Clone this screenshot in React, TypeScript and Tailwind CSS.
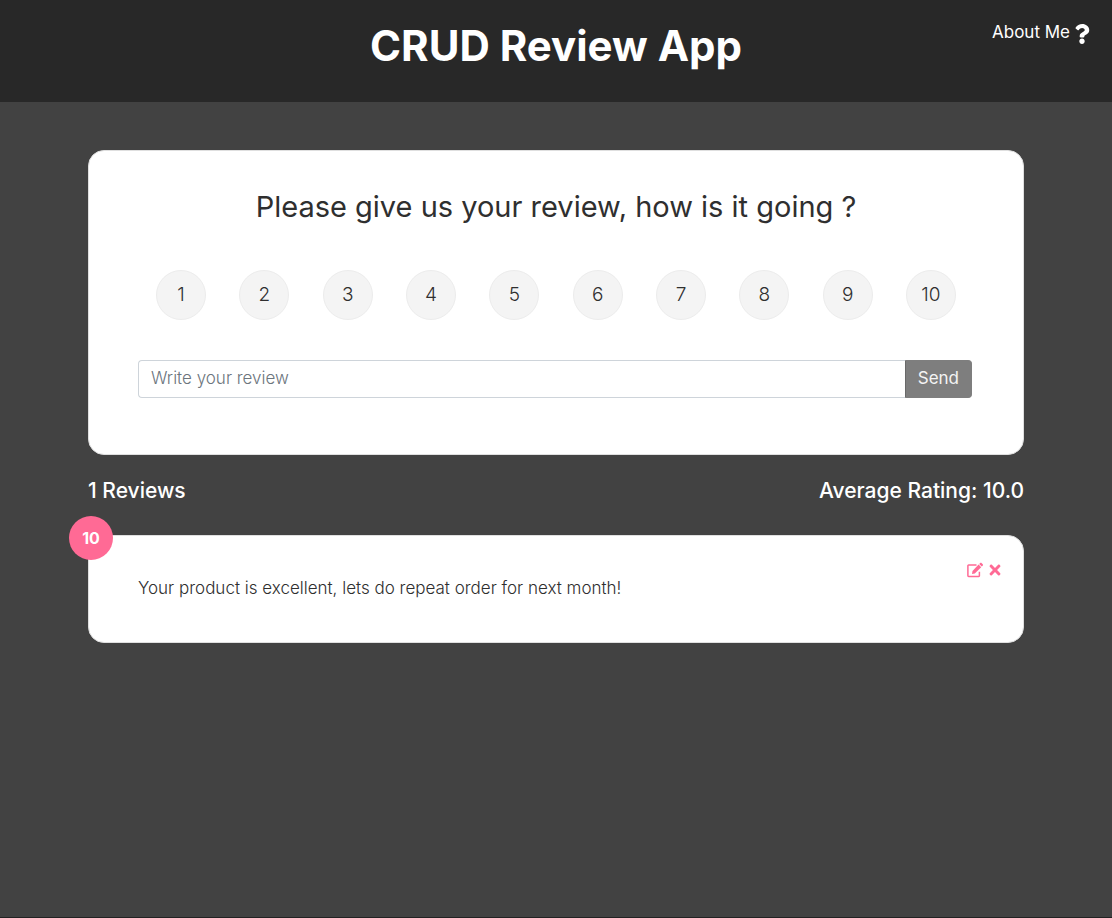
import { FaQuestion, FaTimes } from "react-icons/fa";
import { useState } from "react";

const ratings = [1, 2, 3, 4, 5, 6, 7, 8, 9, 10];

function EditIcon() {
  return (
    <svg width="16" height="16" viewBox="0 0 16 16" fill="none" aria-hidden="true">
      <path d="M9.5 3H1.6a.7.7 0 0 0-.7.7v10.1c0 .4.3.7.7.7h10.1a.7.7 0 0 0 .7-.7V9.8" stroke="currentColor" strokeWidth="1.5" />
      <path d="M11.6 2.6l2.6 2.6-6.4 6.3-2.8.5.5-3.1z" fill="currentColor" />
      <path d="M12.2 2l.8-.8c.5-.5 1.2-.5 1.7 0l.9.9c.5.5.5 1.2 0 1.7l-.8.8z" fill="currentColor" />
    </svg>
  );
}

function Header() {
  return (
    <header className="relative bg-[#282828] px-5 pt-[22px] pb-8 text-white">
      <h1 className="text-center text-[42px] leading-[48px] font-bold">CRUD Review App</h1>
      <a href="#about" className="absolute top-5 right-5 flex items-start gap-0.5 text-[17px] leading-6">
        About Me
        <FaQuestion size={20} className="mt-1" aria-hidden="true" />
      </a>
    </header>
  );
}

function ReviewForm() {
  const [rating, setRating] = useState<number | null>(null);
  const [text, setText] = useState("");

  return (
    <form
      className="rounded-2xl border border-[#dfdfdf] bg-white px-[49px] pt-9 pb-14"
      onSubmit={(event) => event.preventDefault()}
    >
      <h2 className="text-center text-[29px] leading-10">Please give us your review, how is it going ?</h2>
      <fieldset className="mt-[43px] flex justify-between px-[18px]">
        {ratings.map((value) => (
          <label
            key={value}
            className="flex size-[50px] cursor-pointer items-center justify-center rounded-full border border-[#ececec] bg-[#f4f4f4] text-[19px] font-light has-checked:bg-[#ff6a95] has-checked:text-white"
          >
            <input
              type="radio"
              name="rating"
              value={value}
              checked={rating === value}
              onChange={() => setRating(value)}
              className="sr-only"
            />
            {value}
          </label>
        ))}
      </fieldset>
      <div className="mt-10 mr-0.5 flex h-[38px]">
        <input
          type="text"
          aria-label="Write your review"
          placeholder="Write your review"
          value={text}
          onChange={(event) => setText(event.target.value)}
          className="min-w-0 flex-1 rounded-l border border-r-0 border-[#ced4da] px-3 text-[17px] font-light placeholder:text-[#6c757d]"
        />
        <button type="submit" className="rounded-r border border-[#7e7e7e] border-l-[#696969] bg-[#7e7e7e] px-3 text-[17px] text-[#f4f4f4]">
          Send
        </button>
      </div>
    </form>
  );
}

function ReviewCard({ rating, text }: { rating: number; text: string }) {
  return (
    <article className="relative rounded-2xl border border-[#dfdfdf] bg-white px-[49px] pt-10 pb-[42px]">
      <div className="absolute -top-5 -left-5 flex size-11 items-center justify-center rounded-full bg-[#ff6a95] text-[16px] font-bold text-white">
        {rating}
      </div>
      <div className="absolute top-[26px] right-5 flex items-center gap-1 text-[#ff6a95]">
        <button type="button" aria-label="Edit review">
          <EditIcon />
        </button>
        <button type="button" aria-label="Delete review">
          <FaTimes size={16} />
        </button>
      </div>
      <p className="text-[17px] leading-6 font-light">{text}</p>
    </article>
  );
}

export default function App() {
  return (
    <div className="min-h-screen border-b border-[#222222] bg-[#424242] font-['Inter',sans-serif] text-[#2f2f2f]">
      <Header />
      <main className="mx-auto mt-12 max-w-[984px] px-6">
        <ReviewForm />
        <div className="mt-6 mb-8 flex justify-between text-[21px] leading-6 font-medium text-white">
          <h3>1 Reviews</h3>
          <p>Average Rating: 10.0</p>
        </div>
        <ReviewCard rating={10} text="Your product is excellent, lets do repeat order for next month!" />
      </main>
    </div>
  );
}
